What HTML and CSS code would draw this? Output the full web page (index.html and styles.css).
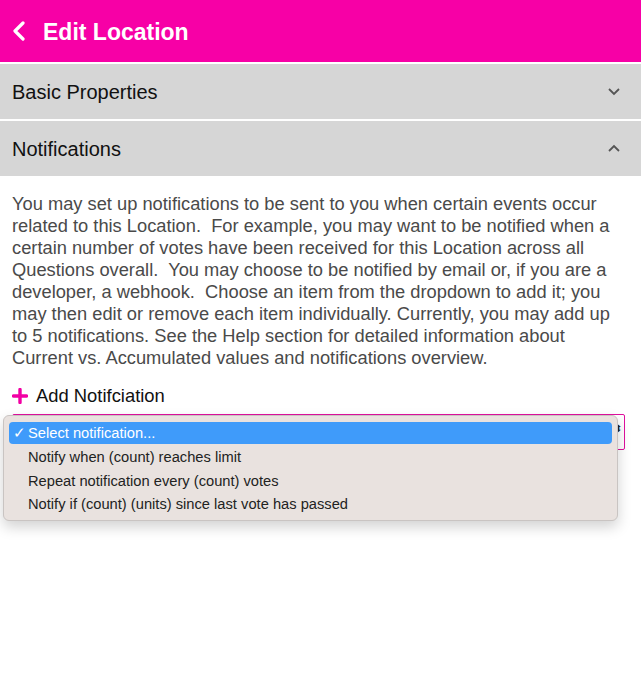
FILE: index.html
```html
<!DOCTYPE html>
<html>
<head>
<meta charset="utf-8">
<link rel="stylesheet" href="styles.css">
</head>
<body>
<header class="topbar">
  <svg class="back" width="14" height="20" viewBox="0 0 14 20"><path d="M11 2 L3 10 L11 18" fill="none" stroke="#fff" stroke-width="3.2" stroke-linecap="round" stroke-linejoin="round"/></svg>
  <h1 class="title">Edit Location</h1>
</header>
<div class="section">
  <span class="section-title">Basic Properties</span>
  <svg class="chev" width="14" height="9" viewBox="0 0 14 9"><path d="M2 2 L7 7 L12 2" fill="none" stroke="#555" stroke-width="1.8"/></svg>
</div>
<div class="section">
  <span class="section-title">Notifications</span>
  <svg class="chev" width="14" height="9" viewBox="0 0 14 9"><path d="M2 7 L7 2 L12 7" fill="none" stroke="#555" stroke-width="1.8"/></svg>
</div>
<main class="content">
  <p class="desc">You may set up notifications to be sent to you when certain events occur related to this Location.&nbsp; For example, you may want to be notified when a certain number of votes have been received for this Location across all Questions overall.&nbsp; You may choose to be notified by email or, if you are a developer, a webhook.&nbsp; Choose an item from the dropdown to add it; you may then edit or remove each item individually. Currently, you may add up to 5 notifications. See the Help section for detailed information about Current vs. Accumulated values and notifications overview.</p>
  <div class="add">
    <svg class="plus" width="16" height="16" viewBox="0 0 16 16"><path d="M8 1.5 V14.5 M1.5 8 H14.5" stroke="#f200a4" stroke-width="3.4" stroke-linecap="round"/></svg>
    <span>Add Notifciation</span>
  </div>
  <div class="select-wrap">
    <div class="select-box"><span class="arrow">⬍</span></div>
    <ul class="menu">
      <li class="item selected"><span class="check">✓</span>Select notification...</li>
      <li class="item">Notify when (count) reaches limit</li>
      <li class="item">Repeat notification every (count) votes</li>
      <li class="item">Notify if (count) (units) since last vote has passed</li>
    </ul>
  </div>
</main>
</body>
</html>
```
FILE: styles.css
```css
* { box-sizing: border-box; }
html, body { margin: 0; padding: 0; background: #fff; }
body { font-family: "Liberation Sans", Arial, sans-serif; width: 641px; min-height: 675px; }

.topbar {
  height: 62px;
  background: #f700a6;
  display: flex;
  align-items: center;
  padding-left: 12px;
  gap: 17px;
  border-bottom: 2px solid #fff;
  box-sizing: content-box;
}
.back { display: block; }
.title {
  margin: 0;
  color: #fff;
  font-size: 23px;
  font-weight: bold;
  position: relative;
  top: 1px;
}

.section {
  height: 55px;
  background: #d6d6d6;
  display: flex;
  align-items: center;
  justify-content: space-between;
  padding: 0 20px 0 12px;
  border-bottom: 2px solid #fff;
  box-sizing: content-box;
}
.section-title { font-size: 20px; color: #111; position: relative; top: 1px; }
.chev { display: block; }

.content { padding: 15px 12px 0 12px; }
.desc {
  margin: 0;
  font-size: 18.3px;
  line-height: 22px;
  color: #4a4a4a;
}
.add {
  display: flex;
  align-items: center;
  gap: 8px;
  margin-top: 16px;
  font-size: 18.4px;
  color: #111;
}
.plus { display: block; }

.select-wrap { margin-top: 7px; display: grid; }
.select-box {
  grid-area: 1 / 1;
  height: 36px;
  border: 1px solid #e0109e;
  border-radius: 2px;
  margin-right: 4px;
  position: relative;
}
.arrow {
  position: absolute;
  right: 2px;
  top: 8px;
  font-size: 10px;
  color: #222;
}
.menu {
  grid-area: 1 / 1;
  position: relative;
  z-index: 2;
  margin: 1px 0 0 -9px;
  width: 615px;
  padding: 6px 5px 4px 5px;
  list-style: none;
  background: #e9e2df;
  border: 1px solid #c9c4c2;
  border-radius: 6px;
  box-shadow: 0 6px 14px rgba(0,0,0,0.18);
  font-family: "Liberation Sans", Arial, sans-serif;
  font-size: 14.7px;
  color: #222;
}
.item {
  height: 23.5px;
  line-height: 24px;
  padding-left: 19px;
  position: relative;
}
.item.selected {
  background: #3f9bfa;
  color: #fff;
  border-radius: 4px;
  height: 22px;
  line-height: 22px;
  margin-bottom: 1px;
}
.check {
  position: absolute;
  left: 4px;
  top: 0;
}
```
